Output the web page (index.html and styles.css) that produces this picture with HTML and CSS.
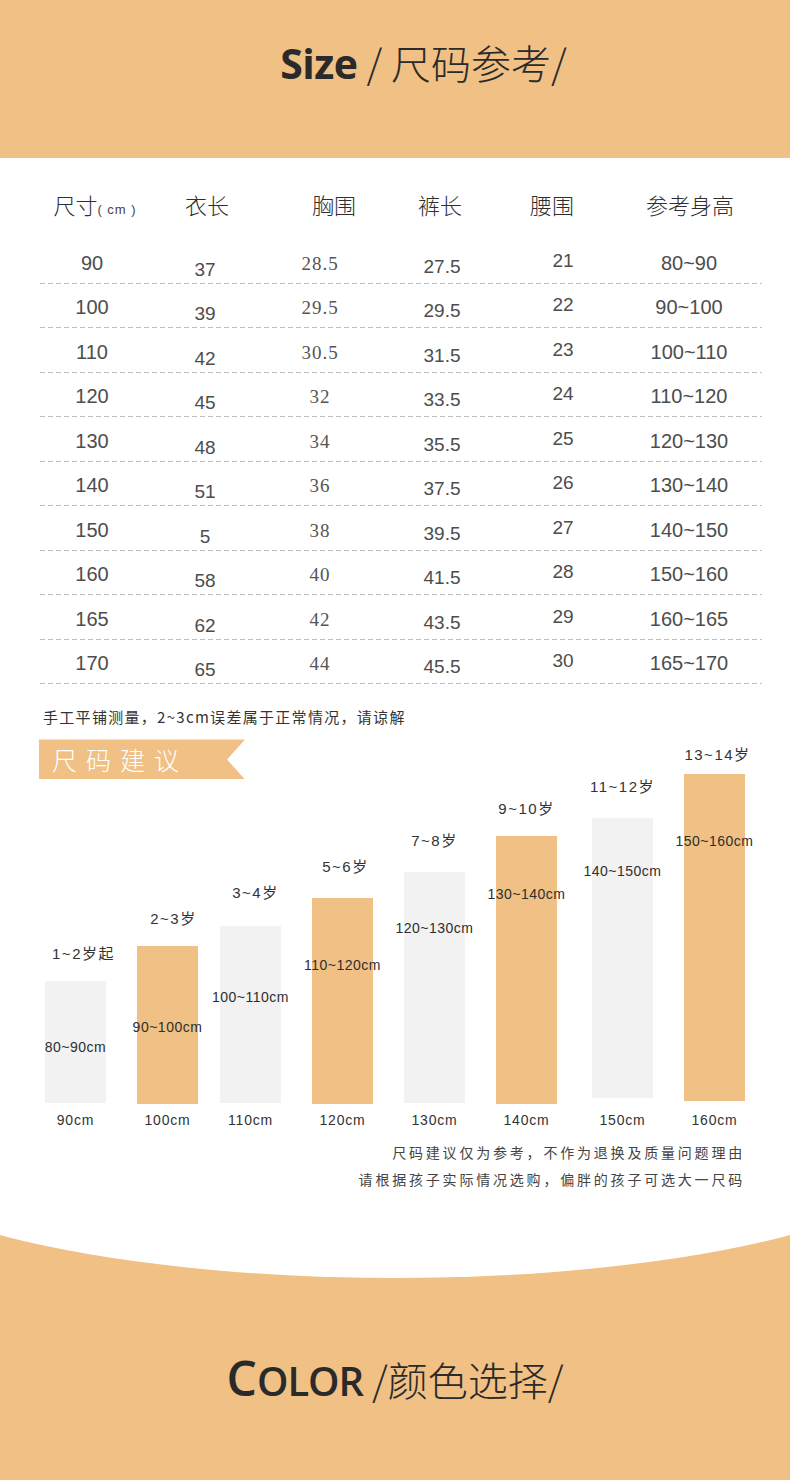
FILE: index.html
```html
<!DOCTYPE html>
<html lang="zh-CN">
<head>
<meta charset="utf-8">
<title>Size 尺码参考</title>
<link rel="stylesheet" href="styles.css">
</head>
<body>
<div class="page">
  <header class="top">
    <h1 class="title"><span class="en">Size</span><span class="zh"> / 尺码参考/</span></h1>
  </header>

  <main class="sheet">
    <div class="table">
      <div class="thead">
        <div>尺寸<small>( cm )</small></div>
        <div>衣长</div>
        <div>胸围</div>
        <div>裤长</div>
        <div>腰围</div>
        <div>参考身高</div>
      </div>
      <div class="row"><span class="c1">90</span><span class="c2">37</span><span class="c3">28.5</span><span class="c4">27.5</span><span class="c5">21</span><span class="c6">80~90</span></div>
      <div class="row"><span class="c1">100</span><span class="c2">39</span><span class="c3">29.5</span><span class="c4">29.5</span><span class="c5">22</span><span class="c6">90~100</span></div>
      <div class="row"><span class="c1">110</span><span class="c2">42</span><span class="c3">30.5</span><span class="c4">31.5</span><span class="c5">23</span><span class="c6">100~110</span></div>
      <div class="row"><span class="c1">120</span><span class="c2">45</span><span class="c3">32</span><span class="c4">33.5</span><span class="c5">24</span><span class="c6">110~120</span></div>
      <div class="row"><span class="c1">130</span><span class="c2">48</span><span class="c3">34</span><span class="c4">35.5</span><span class="c5">25</span><span class="c6">120~130</span></div>
      <div class="row"><span class="c1">140</span><span class="c2">51</span><span class="c3">36</span><span class="c4">37.5</span><span class="c5">26</span><span class="c6">130~140</span></div>
      <div class="row"><span class="c1">150</span><span class="c2">5</span><span class="c3">38</span><span class="c4">39.5</span><span class="c5">27</span><span class="c6">140~150</span></div>
      <div class="row"><span class="c1">160</span><span class="c2">58</span><span class="c3">40</span><span class="c4">41.5</span><span class="c5">28</span><span class="c6">150~160</span></div>
      <div class="row"><span class="c1">165</span><span class="c2">62</span><span class="c3">42</span><span class="c4">43.5</span><span class="c5">29</span><span class="c6">160~165</span></div>
      <div class="row"><span class="c1">170</span><span class="c2">65</span><span class="c3">44</span><span class="c4">45.5</span><span class="c5">30</span><span class="c6">165~170</span></div>
    </div>

    <p class="note">手工平铺测量，2~3cm误差属于正常情况，请谅解</p>

    <div class="chart-area">
      <div class="banner">尺码建议</div>
      <div class="chart">
        <div class="col gray" style="--h:122px;--p:58px;--g:17px;--b:1px;--s:8px"><div class="age">1~2岁起</div><div class="bar"><span>80~90cm</span></div><div class="cm">90cm</div></div>
        <div class="col orange" style="--h:158px;--p:73px;--g:17px;--b:0px;--s:6px"><div class="age">2~3岁</div><div class="bar"><span>90~100cm</span></div><div class="cm">100cm</div></div>
        <div class="col gray" style="--h:177px;--p:63px;--g:23px;--b:1px;--s:5px"><div class="age">3~4岁</div><div class="bar"><span>100~110cm</span></div><div class="cm">110cm</div></div>
        <div class="col orange" style="--h:206px;--p:59px;--g:21px;--b:0px;--s:3px"><div class="age">5~6岁</div><div class="bar"><span>110~120cm</span></div><div class="cm">120cm</div></div>
        <div class="col gray" style="--h:231px;--p:48px;--g:21px;--b:1px;--s:-3px"><div class="age">7~8岁</div><div class="bar"><span>120~130cm</span></div><div class="cm">130cm</div></div>
        <div class="col orange" style="--h:268px;--p:50px;--g:17px;--b:0px;--s:-3px"><div class="age">9~10岁</div><div class="bar"><span>130~140cm</span></div><div class="cm">140cm</div></div>
        <div class="col gray" style="--h:280px;--p:45px;--g:21px;--b:6px;--s:-5px"><div class="age">11~12岁</div><div class="bar"><span>140~150cm</span></div><div class="cm">150cm</div></div>
        <div class="col orange" style="--h:327px;--p:59px;--g:9px;--b:3px;--s:3px"><div class="age">13~14岁</div><div class="bar"><span>150~160cm</span></div><div class="cm">160cm</div></div>
      </div>
    </div>

    <div class="foot">
      <p>尺码建议仅为参考，不作为退换及质量问题理由</p>
      <p>请根据孩子实际情况选购，偏胖的孩子可选大一尺码</p>
    </div>
  </main>

  <footer class="bottom">
    <h2 class="title2"><span class="big">C</span><span class="small">OLOR</span><span class="zh"> /颜色选择/</span></h2>
  </footer>
</div>
</body>
</html>
```

FILE: styles.css
```css
* { box-sizing: border-box; }

html, body {
  margin: 0;
  padding: 0;
  background: #ffffff;
}

body {
  font-family: "Liberation Sans", "Noto Sans CJK SC", sans-serif;
  color: #333;
}

.page {
  width: 790px;
  overflow: hidden;
}

/* ---------- top band ---------- */
.top {
  height: 158px;
  background: #f0c084;
  display: flex;
  align-items: center;
  justify-content: center;
  padding: 0 0 34px 57px;
}

.title {
  margin: 0;
  font-weight: normal;
  color: #2a2a2a;
  white-space: nowrap;
  display: flex;
  align-items: baseline;
}

.title .en {
  font-family: "Open Sans", sans-serif;
  font-weight: 700;
  font-size: 41px;
  letter-spacing: -0.5px;
}

.title .zh {
  font-family: "Noto Sans CJK SC", sans-serif;
  font-weight: 300;
  font-size: 40px;
  white-space: pre;
}

/* ---------- white sheet ---------- */
.sheet {
  background: #fff;
  padding-bottom: 42px;
}

.table {
  margin: 0 28px 0 40px;
}

.thead {
  display: grid;
  grid-template-columns: 110px 114px 140px 72px 152px 124px;
  height: 81px;
  padding-top: 34px;
  font-family: "Noto Sans CJK SC", sans-serif;
  font-weight: 300;
  font-size: 22px;
  line-height: 24px;
  color: #2e2e2e;
}

.thead > div {
  text-align: center;
  white-space: nowrap;
}

.thead small {
  font-family: "Liberation Sans", sans-serif;
  font-size: 13px;
  color: #444;
  letter-spacing: 1px;
}

.row {
  display: grid;
  grid-template-columns: 104px 122px 108px 136px 106px 146px;
  height: 44.55px;
  align-items: end;
  background-image: linear-gradient(to right, #bdbdbd 5px, transparent 5px);
  background-size: 8px 1px;
  background-repeat: repeat-x;
  background-position: left bottom;
  padding-bottom: 1px;
  font-family: "Liberation Sans", sans-serif;
  color: #4d4d4d;
  line-height: 24px;
}

.row > span {
  text-align: center;
  white-space: nowrap;
}

.row .c1 { font-size: 20px; padding-bottom: 8px; }
.row .c2 { font-size: 19px; padding-bottom: 1px; }
.row .c3 {
  font-family: "Liberation Serif", serif;
  font-size: 19px;
  letter-spacing: 1px;
  padding-bottom: 7px;
  color: #555;
}
.row .c4 { font-size: 19px; padding-bottom: 4px; }
.row .c5 { font-size: 19px; padding-bottom: 10px; }
.row .c6 { font-size: 20px; padding-bottom: 8px; }

.note {
  margin: 23px 0 0 43px;
  font-family: "Noto Sans CJK SC", sans-serif;
  font-size: 15px;
  line-height: 20px;
  letter-spacing: 1.3px;
  color: #333;
}

/* ---------- chart ---------- */
.chart-area {
  display: grid;
  margin-top: 12px;
}

.chart-area > * {
  grid-area: 1 / 1;
}

.banner {
  align-self: start;
  margin-left: 39px;
  width: 206px;
  height: 40px;
  background: #f0c084;
  clip-path: polygon(0 0, 100% 0, calc(100% - 18px) 50%, 100% 100%, 0 100%);
  color: #fff;
  font-family: "Noto Sans CJK SC", sans-serif;
  font-weight: 300;
  font-size: 25px;
  line-height: 40px;
  letter-spacing: 9px;
  padding-left: 13px;
}

.chart {
  display: flex;
  align-items: flex-end;
  padding: 6px 0 0 45px;
}

.col {
  width: 61px;
  display: flex;
  flex-direction: column;
  margin-left: 31px;
}

.col:first-child { margin-left: 0; }
.col:nth-child(3) { margin-left: 22px; }
.col:nth-child(7) { margin-left: 35px; }

.age {
  display: flex;
  justify-content: center;
  white-space: nowrap;
  font-family: "Liberation Sans", "Noto Sans CJK SC", sans-serif;
  font-size: 15px;
  line-height: 20px;
  letter-spacing: 1.5px;
  color: #333;
  margin-bottom: var(--g);
  padding-left: calc(var(--s) * 2);
}

.bar {
  height: var(--h);
  padding-top: var(--p);
  margin-bottom: var(--b);
  display: flex;
  justify-content: center;
  align-items: flex-start;
  white-space: nowrap;
  font-family: "Liberation Sans", sans-serif;
  font-size: 14px;
  line-height: 16px;
  letter-spacing: 0.5px;
  color: #2e2e2e;
}

.gray .bar { background: #f2f2f2; }
.orange .bar { background: #f0c084; }

.cm {
  margin-top: 6px;
  display: flex;
  justify-content: center;
  white-space: nowrap;
  font-family: "Liberation Sans", sans-serif;
  font-size: 14px;
  line-height: 20px;
  letter-spacing: 0.8px;
  color: #333;
}

.foot {
  margin-top: 9px;
  padding-right: 45px;
  text-align: right;
  font-family: "Noto Sans CJK SC", sans-serif;
  font-size: 14px;
  line-height: 27px;
  letter-spacing: 2.8px;
  color: #444;
}

.foot p { margin: 0; }

/* ---------- bottom band ---------- */
.bottom {
  position: relative;
  overflow: hidden;
  height: 245px;
  background: #f0c084;
  display: flex;
  align-items: center;
  justify-content: center;
  padding-top: 39px;
}

.bottom::before {
  content: "";
  position: absolute;
  left: 50%;
  top: -239px;
  width: 1100px;
  height: 282px;
  margin-left: -550px;
  border-radius: 50%;
  background: #fff;
}

.title2 {
  position: relative;
  margin: 0;
  font-weight: normal;
  color: #2a2a2a;
  white-space: nowrap;
  display: flex;
  align-items: baseline;
}

.title2 .big,
.title2 .small {
  font-family: "Open Sans", sans-serif;
  font-weight: 600;
}

.title2 .big { font-size: 48px; }
.title2 .small { font-size: 40px; letter-spacing: -1px; }

.title2 .zh {
  font-family: "Noto Sans CJK SC", sans-serif;
  font-weight: 300;
  font-size: 40px;
  white-space: pre;
}
```
